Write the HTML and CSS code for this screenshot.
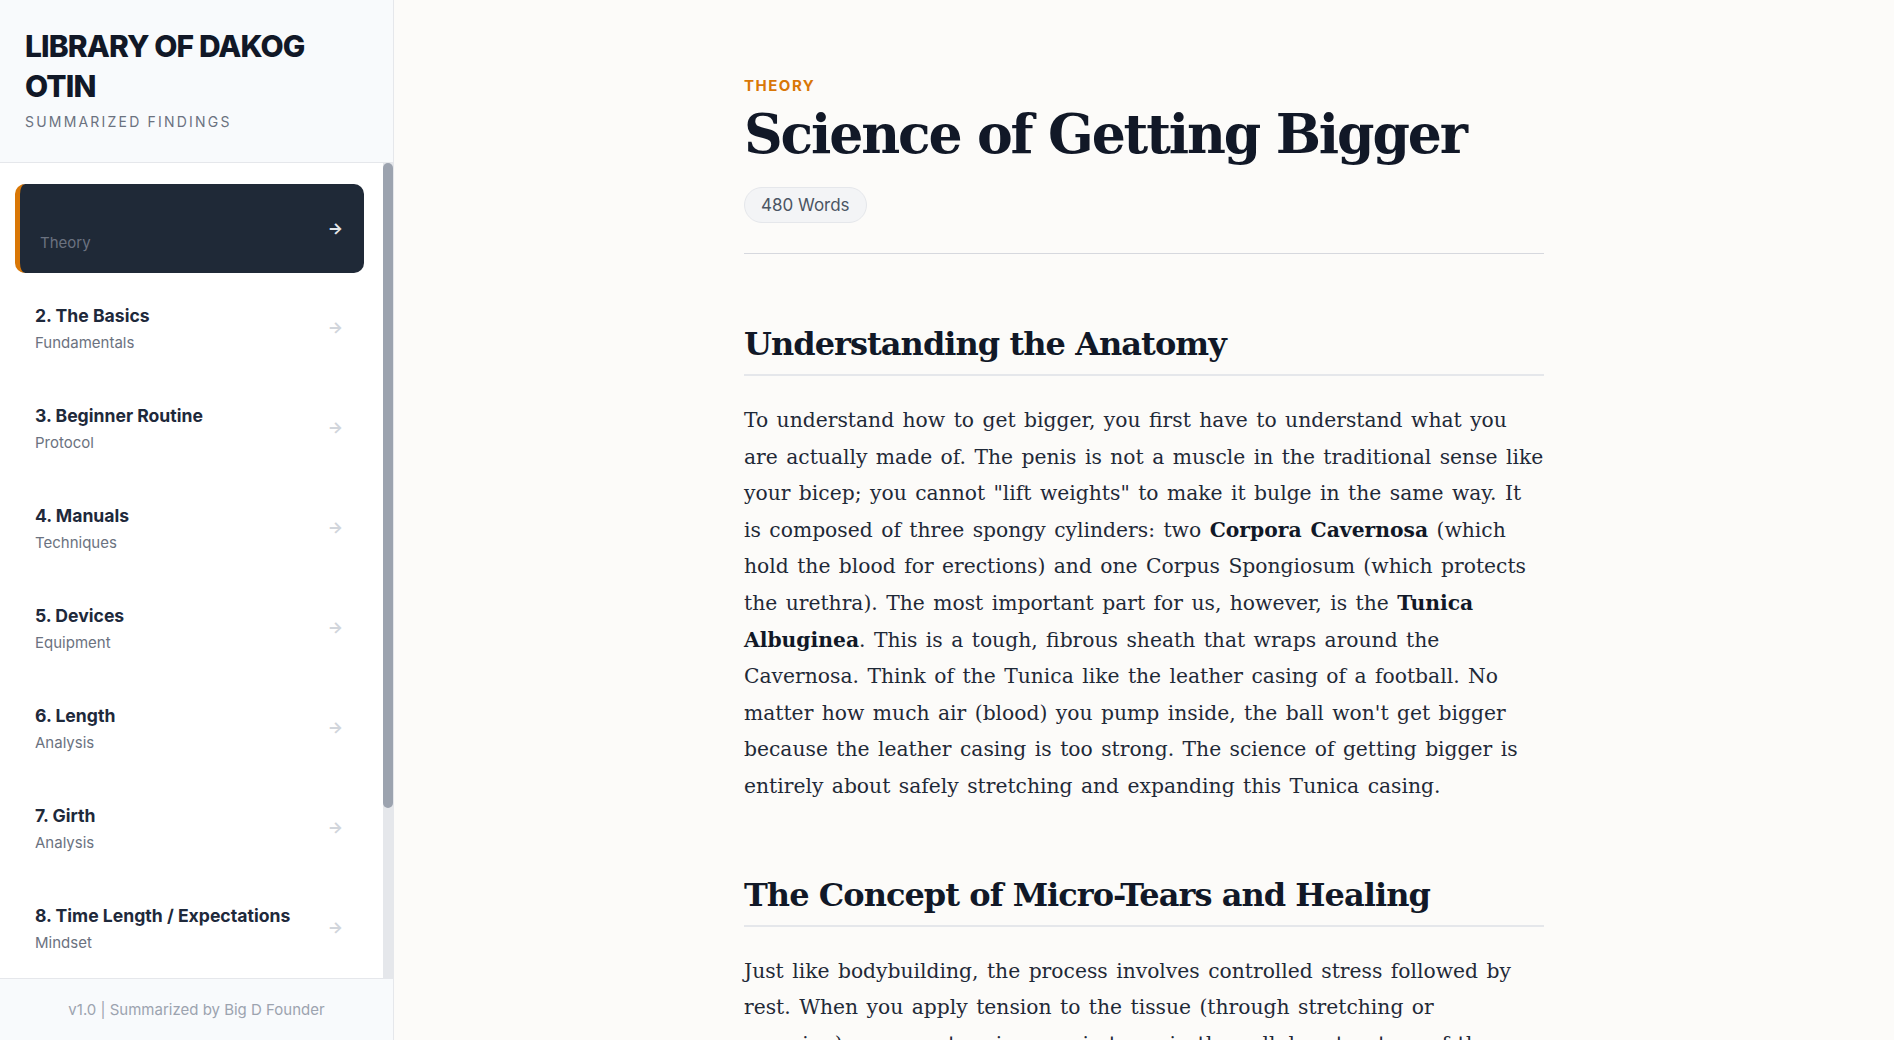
FILE: index.html
```html
<!DOCTYPE html>
<html lang="en">
<head>
<meta charset="utf-8">
<title>Library of Dakogotin</title>
<link rel="stylesheet" href="styles.css">
</head>
<body>
<div class="app">
  <aside class="sidebar">
    <header class="brand">
      <h1 class="brand-title">LIBRARY OF DAKOGOTIN</h1>
      <p class="brand-sub">SUMMARIZED FINDINGS</p>
    </header>
    <div class="side-body">
      <nav class="nav">
        <a class="nav-item active" href="#">
          <span class="nav-text"><span class="nav-title">1. Science of Getting Bigger</span><span class="nav-sub">Theory</span></span>
          <span class="nav-arrow">→</span>
        </a>
        <a class="nav-item" href="#">
          <span class="nav-text"><span class="nav-title">2. The Basics</span><span class="nav-sub">Fundamentals</span></span>
          <span class="nav-arrow">→</span>
        </a>
        <a class="nav-item" href="#">
          <span class="nav-text"><span class="nav-title">3. Beginner Routine</span><span class="nav-sub">Protocol</span></span>
          <span class="nav-arrow">→</span>
        </a>
        <a class="nav-item" href="#">
          <span class="nav-text"><span class="nav-title">4. Manuals</span><span class="nav-sub">Techniques</span></span>
          <span class="nav-arrow">→</span>
        </a>
        <a class="nav-item" href="#">
          <span class="nav-text"><span class="nav-title">5. Devices</span><span class="nav-sub">Equipment</span></span>
          <span class="nav-arrow">→</span>
        </a>
        <a class="nav-item" href="#">
          <span class="nav-text"><span class="nav-title">6. Length</span><span class="nav-sub">Analysis</span></span>
          <span class="nav-arrow">→</span>
        </a>
        <a class="nav-item" href="#">
          <span class="nav-text"><span class="nav-title">7. Girth</span><span class="nav-sub">Analysis</span></span>
          <span class="nav-arrow">→</span>
        </a>
        <a class="nav-item" href="#">
          <span class="nav-text"><span class="nav-title">8. Time Length / Expectations</span><span class="nav-sub">Mindset</span></span>
          <span class="nav-arrow">→</span>
        </a>
      </nav>
      <div class="scroll-track"><div class="scroll-thumb"></div></div>
    </div>
    <footer class="side-footer">v1.0 | Summarized by Big D Founder</footer>
  </aside>
  <main class="main">
    <article class="article">
      <header class="article-head">
        <div class="kicker">THEORY</div>
        <h1 class="title">Science of Getting Bigger</h1>
        <span class="pill">480 Words</span>
      </header>
      <h2 class="section-title">Understanding the Anatomy</h2>
      <p class="para">To understand how to get bigger, you first have to understand what you are actually made of. The penis is not a muscle in the traditional sense like your bicep; you cannot "lift weights" to make it bulge in the same way. It is composed of three spongy cylinders: two <strong>Corpora Cavernosa</strong> (which hold the blood for erections) and one Corpus Spongiosum (which protects the urethra). The most important part for us, however, is the <strong>Tunica Albuginea</strong>. This is a tough, fibrous sheath that wraps around the Cavernosa. Think of the Tunica like the leather casing of a football. No matter how much air (blood) you pump inside, the ball won't get bigger because the leather casing is too strong. The science of getting bigger is entirely about safely stretching and expanding this Tunica casing.</p>
      <h2 class="section-title">The Concept of Micro-Tears and Healing</h2>
      <p class="para">Just like bodybuilding, the process involves controlled stress followed by rest. When you apply tension to the tissue (through stretching or pumping), you create microscopic tears in the cellular structure of the Tunica. As these tears heal, the body lays down new tissue, leaving the casing slightly larger than before.</p>
    </article>
  </main>
</div>
</body>
</html>
```
FILE: styles.css
```css
* { box-sizing: border-box; }
html, body { margin: 0; padding: 0; height: 100%; }
body {
  font-family: Inter, "Noto Sans", sans-serif;
  background: #fcfbf9;
  color: #1f2937;
  overflow: hidden;
}
.app { display: flex; height: 100vh; }

/* Sidebar */
.sidebar {
  width: 394px;
  flex: none;
  display: flex;
  flex-direction: column;
  background: #ffffff;
  border-right: 1px solid #e5e7eb;
  height: 100vh;
}
.brand {
  flex: none;
  background: #f8fafc;
  border-bottom: 1px solid #e5e7eb;
  padding: 26px 25px 29px 25px;
  height: 163px;
}
.brand-title {
  margin: 0;
  max-width: 300px;
  font-size: 30px;
  line-height: 40px;
  font-weight: 800;
  letter-spacing: -0.03em;
  color: #111827;
  word-break: break-all;
}
.brand-sub {
  margin: 6px 0 0;
  font-size: 14px;
  line-height: 20px;
  letter-spacing: 2.2px;
  color: #6b7280;
}
.side-body {
  flex: 1;
  min-height: 0;
  display: flex;
}
.nav {
  flex: 1;
  min-width: 0;
  overflow: hidden;
  padding: 21px 19px 22px 15px;
  display: flex;
  flex-direction: column;
  gap: 11px;
}
.scroll-track {
  flex: none;
  width: 10px;
  background: #e5e7eb;
}
.scroll-thumb {
  height: 645px;
  background: #9ca3af;
  border-radius: 5px;
}
.nav-item {
  flex: none;
  display: flex;
  align-items: center;
  justify-content: space-between;
  height: 89px;
  padding: 20px 21px 20px 20px;
  border-radius: 10px;
  text-decoration: none;
  color: #1e293b;
}
.nav-text { display: flex; flex-direction: column; gap: 4px; }
.nav-title { font-size: 17.6px; line-height: 24px; font-weight: 700; color: #1e293b; }
.nav-sub { font-size: 15px; line-height: 21px; color: #6b7280; }
.nav-arrow { font-size: 16px; line-height: 24px; color: #d1d5db; font-weight: 700; margin-top: -4px; }
.nav-item.active {
  background: #1f2937;
  border-left: 5px solid #d97706;
  padding-left: 20px;
}
.nav-item.active .nav-title { color: #1f2937; }
.nav-item.active .nav-sub { color: #6b7280; }
.nav-item.active .nav-arrow { color: #e5e7eb; margin-top: -2px; }
.side-footer {
  flex: none;
  height: 62px;
  border-top: 1px solid #e5e7eb;
  background: #f8fafc;
  display: flex;
  align-items: center;
  justify-content: center;
  font-size: 15px;
  color: #9ca3af;
}

/* Main */
.main {
  flex: 1;
  overflow-y: auto;
  scrollbar-width: none;
}
.main::-webkit-scrollbar { display: none; }
.article {
  max-width: 800px;
  margin: 0 auto;
  padding: 76px 0 80px;
  font-family: "DejaVu Serif", "Liberation Serif", serif;
}
.article-head {
  padding-bottom: 30px;
  border-bottom: 1px solid #d6d8de;
}
.kicker {
  font-family: Inter, sans-serif;
  font-size: 15px;
  line-height: 20px;
  font-weight: 700;
  letter-spacing: 0.1em;
  color: #d97706;
}
.title {
  margin: 6px 0 19px;
  font-size: 53.6px;
  line-height: 66px;
  font-weight: 700;
  letter-spacing: -0.04em;
  color: #111827;
  white-space: nowrap;
}
.pill {
  display: inline-block;
  font-family: Inter, sans-serif;
  font-size: 17px;
  line-height: 24px;
  padding: 5px 16px;
  border: 1px solid #e5e7eb;
  border-radius: 999px;
  background: #f3f4f6;
  color: #4b5563;
}
.section-title {
  margin: 69px 0 0;
  padding-bottom: 9px;
  border-bottom: 2px solid #e5e7eb;
  font-size: 32px;
  line-height: 42px;
  font-weight: 700;
  letter-spacing: -0.03em;
  color: #111827;
}
.para {
  margin: 26px 0 0;
  width: 800px;
  font-size: 20.3px;
  line-height: 36.6px;
  word-spacing: 2px;
  color: #1f2937;
}
.para strong { color: #111827; }
```
